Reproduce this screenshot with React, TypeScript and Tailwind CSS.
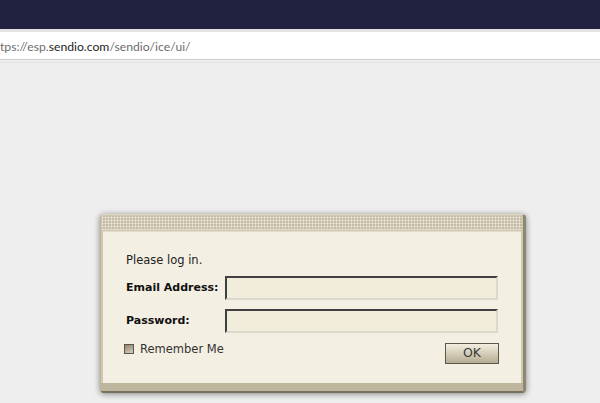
import React from "react";

export default function App() {
  return (
    <div className="w-[600px] h-[403px] overflow-hidden bg-[#eeeeee] flex flex-col">
      <div className="h-[29px] bg-[#20223f] shrink-0" />
      <div className="h-[3px] bg-[#e4e4e4] shrink-0" />
      <div className="h-[28px] bg-white border-b border-[#cdcdcd] shrink-0 flex items-center pt-[3px]">
        <span className="text-[12.2px] leading-none text-[#6d6d6d] font-['Lato',sans-serif] whitespace-nowrap">
          tps://esp.<span className="text-[#1e1e1e]">sendio.com</span>/sendio/ice/ui/
        </span>
      </div>
      <div className="h-[3px] border-b border-[#e2e2e2] shrink-0" />
      <div className="flex-1 pt-[151px] pl-[100px]">
        <div className="w-[426px] h-[179px] rounded-[4px] bg-[#cfc7b0] shadow-[0_1px_6px_rgba(0,0,0,0.45)] flex flex-col border-r-[3px] border-r-[#8e8774] border-b-[2px] border-b-[#77705f] border-l border-l-[#bdb59e] border-t border-t-[#ddd6c4]">
          <div className="h-[14px] mx-[1px] mt-[1px] bg-[#c4bba1] bg-[image:repeating-linear-gradient(90deg,rgba(255,255,255,0.4)_0px,rgba(255,255,255,0.4)_1px,transparent_1px,transparent_3px),repeating-linear-gradient(0deg,rgba(255,255,255,0.4)_0px,rgba(255,255,255,0.4)_1px,transparent_1px,transparent_3px)]" />
          <div className="mx-[2px] mt-[1px] flex-1 bg-[#f4efe3] border-t border-[#e2dccb] pl-[23px] pr-[20px] pt-[20px] font-['DejaVu_Sans',sans-serif] text-[#222]">
            <div className="text-[11.5px] leading-[16px]">Please log in.</div>
            <div className="mt-[8px] flex items-center">
              <div className="w-[99px] text-[11px] font-bold text-[#111]">Email Address:</div>
              <input
                type="text"
                className="w-[273px] h-[24px] bg-[#f2edda] border-t-2 border-l-2 border-t-[#404040] border-l-[#404040] border-b-2 border-r-2 border-b-[#dcd8cd] border-r-[#dcd8cd] outline-none"
              />
            </div>
            <div className="mt-[9px] flex items-center">
              <div className="w-[99px] text-[11px] font-bold text-[#111]">Password:</div>
              <input
                type="password"
                className="w-[273px] h-[24px] bg-[#f2edda] border-t-2 border-l-2 border-t-[#404040] border-l-[#404040] border-b-2 border-r-2 border-b-[#dcd8cd] border-r-[#dcd8cd] outline-none"
              />
            </div>
            <div className="mt-[10px] flex items-start justify-between w-[373px]">
              <label className="flex items-center ml-[-2px] mt-[-1px]">
                <span className="w-[10px] h-[10px] border border-[#5c5648] bg-[linear-gradient(160deg,#8d8472,#d6ceb8)]" />
                <span className="ml-[6px] text-[11.5px] leading-[14px] text-[#333]">Remember Me</span>
              </label>
              <button className="w-[54px] h-[21px] border border-[#5e5747] bg-[linear-gradient(180deg,#f3eee0,#b5ac91)] text-[12.5px] leading-none text-[#3a3a3a] font-['DejaVu_Sans',sans-serif]">
                OK
              </button>
            </div>
          </div>
          <div className="h-[8px] bg-[#bdb59c]" />
        </div>
      </div>
    </div>
  );
}
